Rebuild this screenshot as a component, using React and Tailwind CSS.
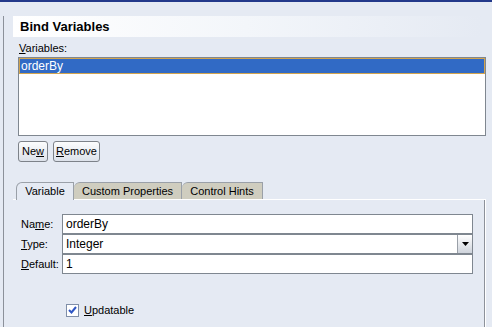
import React from "react";

export default function App() {
  const font = { fontFamily: '"Liberation Sans", Tahoma, sans-serif' };

  return (
    <div
      className="w-[492px] h-[327px] overflow-hidden bg-[#e5eaf3] border-t-2 border-[#23398a] text-[11px] text-black"
      style={font}
    >
      <div className="ml-[3px] mt-[14px] h-[400px] border-l border-[#8c919a] pl-[9px]">
        {/* header */}
        <div className="h-[21px] w-[468px] flex items-center pl-[7px] bg-gradient-to-r from-white via-[#f3f6fa] to-[#e5eaf3]">
          <span className="text-[13px] font-bold">Bind Variables</span>
        </div>

        <div className="pl-[5px] pr-[3px]">
          <div className="mt-[4px] h-[14px] leading-[14px] pl-[1px]">
            <span className="underline">V</span>ariables:
          </div>

          {/* list */}
          <div className="mt-[2px] w-[468px] h-[79px] bg-white border border-[#7f8790]">
            <div className="h-[16px] leading-[14px] bg-[#316ac5] border border-[#d2a44f] text-white pl-[1px] text-[12px]">
              orderBy
            </div>
          </div>

          {/* buttons */}
          <div className="mt-[5px] flex gap-[5px]">
            <button className="h-[21px] px-[3px] border border-[#7d8289] rounded-[3px] bg-gradient-to-b from-[#fbfcfd] to-[#dde2ea] text-[11px]">
              Ne<span className="underline">w</span>
            </button>
            <button className="h-[21px] px-[2px] border border-[#7d8289] rounded-[3px] bg-gradient-to-b from-[#fbfcfd] to-[#dde2ea] text-[11px]">
              <span className="underline">R</span>emove
            </button>
          </div>

          {/* tabs */}
          <div className="mt-[20px] flex items-end -ml-[2px]">
            <div className="h-[18px] w-[58px] flex items-center justify-center bg-[#e5eaf3] border-t border-l border-r border-[#9aa0a8] rounded-tl-[6px] text-[11px] -mb-px relative z-10">
              Variable
            </div>
            <div className="h-[17px] w-[108px] flex items-center justify-center bg-[#cfcdbf] border-t border-r border-[#9aa0a8] rounded-tl-[6px] text-[11px]">
              Custom Properties
            </div>
            <div className="h-[17px] w-[81px] flex items-center justify-center bg-[#cfcdbf] border-t border-r border-[#9aa0a8] rounded-tl-[6px] text-[11px]">
              Control Hints
            </div>
          </div>

          {/* panel */}
          <div className="-ml-[5px] w-[473px] h-[140px] border-t border-r border-white">
            <div className="h-full border-r border-[#8c919a]">
              <div className="pt-[14px] pl-[8px] flex flex-col">
                <div className="flex items-center h-[20px]">
                  <div className="w-[41px]">
                    Na<span className="underline">m</span>e:
                  </div>
                  <div className="w-[411px] h-[20px] bg-white border border-[#7f8790] flex items-center pl-[3px] text-[12px]">
                    orderBy
                  </div>
                </div>
                <div className="flex items-center h-[20px]">
                  <div className="w-[41px]">
                    <span className="underline">T</span>ype:
                  </div>
                  <div className="w-[411px] h-[20px] bg-white border border-[#7f8790] flex items-center pl-[3px] text-[12px]">
                    <span className="flex-1">Integer</span>
                    <div className="w-[15px] h-[18px] bg-gradient-to-b from-white to-[#cfd4dc] border-l border-[#9aa0a8] flex items-center justify-center">
                      <svg width="7" height="4" viewBox="0 0 7 4">
                        <path d="M0 0 H7 L3.5 4 Z" fill="#000" />
                      </svg>
                    </div>
                  </div>
                </div>
                <div className="flex items-center h-[20px]">
                  <div className="w-[41px]">
                    <span className="underline">D</span>efault:
                  </div>
                  <div className="w-[411px] h-[20px] bg-white border border-[#7f8790] flex items-center pl-[3px] text-[12px]">
                    1
                  </div>
                </div>

                <div className="mt-[28px] ml-[45px] flex items-center gap-[5px]">
                  <div className="w-[13px] h-[13px] bg-white border border-[#7f8ea8] flex items-center justify-center">
                    <svg width="9" height="8" viewBox="0 0 9 8">
                      <path d="M1 4 L3.5 6.5 L8 1" stroke="#2f56c4" strokeWidth="2" fill="none" />
                    </svg>
                  </div>
                  <span className="text-[11px]">
                    <span className="underline">U</span>pdatable
                  </span>
                </div>
              </div>
            </div>
          </div>
        </div>
      </div>
    </div>
  );
}
